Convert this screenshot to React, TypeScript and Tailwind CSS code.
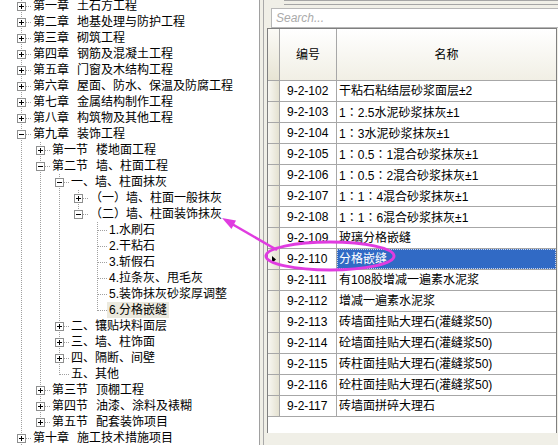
import React from 'react';

type TNode = { label: string; title?: string; exp?: '+' | '-'; kids?: TNode[]; sel?: boolean };
type Row = { node: TNode; level: number; guides: boolean[]; last: boolean };

const leaves: TNode[] = [
  { label: '1.水刷石' },
  { label: '2.干粘石' },
  { label: '3.斩假石' },
  { label: '4.拉条灰、甩毛灰' },
  { label: '5.装饰抹灰砂浆厚调整' },
  { label: '6.分格嵌缝', sel: true },
];

const tree: TNode[] = [
  { label: '第一章', title: '土石方工程', exp: '+' },
  { label: '第二章', title: '地基处理与防护工程', exp: '+' },
  { label: '第三章', title: '砌筑工程', exp: '+' },
  { label: '第四章', title: '钢筋及混凝土工程', exp: '+' },
  { label: '第五章', title: '门窗及木结构工程', exp: '+' },
  { label: '第六章', title: '屋面、防水、保温及防腐工程', exp: '+' },
  { label: '第七章', title: '金属结构制作工程', exp: '+' },
  { label: '第八章', title: '构筑物及其他工程', exp: '+' },
  {
    label: '第九章',
    title: '装饰工程',
    exp: '-',
    kids: [
      { label: '第一节', title: '楼地面工程', exp: '+' },
      {
        label: '第二节',
        title: '墙、柱面工程',
        exp: '-',
        kids: [
          {
            label: '一、墙、柱面抹灰',
            exp: '-',
            kids: [
              { label: '（一）墙、柱面一般抹灰', exp: '+' },
              { label: '（二）墙、柱面装饰抹灰', exp: '-', kids: leaves },
            ],
          },
          { label: '二、镶贴块料面层', exp: '+' },
          { label: '三、墙、柱饰面', exp: '+' },
          { label: '四、隔断、间壁', exp: '+' },
          { label: '五、其他' },
        ],
      },
      { label: '第三节', title: '顶棚工程', exp: '+' },
      { label: '第四节', title: '油漆、涂料及裱糊', exp: '+' },
      { label: '第五节', title: '配套装饰项目', exp: '+' },
    ],
  },
  { label: '第十章', title: '施工技术措施项目', exp: '+' },
];

// 第十章 之后还有章节, 根级竖线一直延续到底
function flatten(nodes: TNode[], level: number, guides: boolean[], out: Row[]) {
  nodes.forEach((n, i) => {
    const last = i === nodes.length - 1 && level > 0;
    out.push({ node: n, level, guides, last });
    if (n.kids && n.exp === '-') flatten(n.kids, level + 1, [...guides, !last], out);
  });
  return out;
}

const rows = flatten(tree, 0, [], []);

const items: [string, string][] = [
  ['9-2-102', '干粘石粘结层砂浆面层±2'],
  ['9-2-103', '1：2.5水泥砂浆抹灰±1'],
  ['9-2-104', '1：3水泥砂浆抹灰±1'],
  ['9-2-105', '1：0.5：1混合砂浆抹灰±1'],
  ['9-2-106', '1：0.5：2混合砂浆抹灰±1'],
  ['9-2-107', '1：1：4混合砂浆抹灰±1'],
  ['9-2-108', '1：1：6混合砂浆抹灰±1'],
  ['9-2-109', '玻璃分格嵌缝'],
  ['9-2-110', '分格嵌缝'],
  ['9-2-111', '有108胶增减一遍素水泥浆'],
  ['9-2-112', '增减一遍素水泥浆'],
  ['9-2-113', '砖墙面挂贴大理石(灌缝浆50)'],
  ['9-2-114', '砼墙面挂贴大理石(灌缝浆50)'],
  ['9-2-115', '砖柱面挂贴大理石(灌缝浆50)'],
  ['9-2-116', '砼柱面挂贴大理石(灌缝浆50)'],
  ['9-2-117', '砖墙面拼碎大理石'],
];

const LINE = '#a0a0a0';

// 全角冒号用繁体字体, 让冒号居中显示
function Name({ text }: { text: string }) {
  const parts = text.split('：');
  return (
    <>
      {parts.map((p, i) => (
        <React.Fragment key={i}>
          {i > 0 && <span className="font-['Noto_Sans_CJK_TC',sans-serif]">：</span>}
          {p}
        </React.Fragment>
      ))}
    </>
  );
}

function Guide({ on }: { on: boolean }) {
  return (
    <svg width="19" height="16" className="shrink-0" shapeRendering="crispEdges">
      {on && <line x1="9.5" y1="0" x2="9.5" y2="16" stroke={LINE} strokeDasharray="1 1" />}
    </svg>
  );
}

function Connector({ last, exp }: { last: boolean; exp?: '+' | '-' }) {
  return (
    <svg width="19" height="16" className="shrink-0" shapeRendering="crispEdges">
      <line x1="9.5" y1="0" x2="9.5" y2={last ? 9 : 16} stroke={LINE} strokeDasharray="1 1" />
      <line x1="10" y1="8.5" x2="19" y2="8.5" stroke={LINE} strokeDasharray="1 1" />
      {exp && (
        <g>
          <rect x="5.5" y="4.5" width="8" height="8" fill="#fff" stroke="#8e8f8f" />
          <line x1="7" y1="8.5" x2="12" y2="8.5" stroke="#000" />
          {exp === '+' && <line x1="9.5" y1="6" x2="9.5" y2="11" stroke="#000" />}
        </g>
      )}
    </svg>
  );
}

function TreeRow({ row }: { row: Row }) {
  const { node } = row;
  return (
    <div className="flex h-4 items-center">
      {row.guides.map((g, k) => (
        <Guide key={k} on={g} />
      ))}
      <Connector last={row.last} exp={node.exp} />
      <span
        className={
          'whitespace-nowrap px-[2px] leading-4 ' + (node.sel ? 'bg-[#ebe9de]' : '')
        }
      >
        {node.label}
        {node.title && <span className="ml-2">{node.title}</span>}
      </span>
    </div>
  );
}

export default function App() {
  return (
    <div className="relative flex h-[445px] w-[558px] overflow-hidden bg-[#f0efe7] font-['Liberation_Sans','Noto_Sans_CJK_SC',sans-serif] text-[12px] text-black">
      <div className="h-full w-[260px] shrink-0 overflow-hidden border-r border-[#a0a0a0] bg-white">
        <div className="-mt-[2px] pl-3">
          {rows.map((r, i) => (
            <TreeRow key={i} row={r} />
          ))}
        </div>
      </div>
      <div className="w-[3px] shrink-0" />
      <div className="flex flex-1 flex-col border-l border-[#a9a9a9]">
        <div className="h-[8px] shrink-0 pl-[20px]">
          <div className="h-[5px] border-y border-[#a5a5a5]" />
        </div>
        <div className="ml-[7px] h-[20px] w-[320px] shrink-0 border border-[#b7b7b7] bg-white pl-[4px] italic leading-[18px] text-[#aaaaaa]">
          Search...
        </div>
        <div className="ml-[3px] flex h-[405px] w-[290px] shrink-0 flex-col border-x border-t border-[#7f7f7f] bg-white">
          <div className="flex h-[52px] shrink-0 border-b border-[#a7a7a7] bg-gradient-to-b from-white to-[#f1efe5]">
            <div className="w-[12px] shrink-0 border-r border-[#a7a7a7] bg-gradient-to-b from-[#fbfaf6] to-[#e7e4d4]" />
            <div className="flex w-[57px] shrink-0 items-center justify-center border-r border-[#a7a7a7]">编号</div>
            <div className="flex flex-1 items-center justify-center">名称</div>
          </div>
          {items.map(([code, name]) => {
            const sel = code === '9-2-110';
            return (
              <div key={code} className="flex h-[21px] shrink-0 border-b border-[#a7a7a7]">
                <div className="flex w-[12px] shrink-0 items-center justify-center border-r border-[#a7a7a7] bg-gradient-to-r from-[#f8f7f2] to-[#e4e1d0]">
                  {sel && (
                    <svg width="4" height="7" viewBox="0 0 4 7">
                      <path d="M0 0 L4 3.5 L0 7 Z" fill="#000" />
                    </svg>
                  )}
                </div>
                <div className="flex w-[57px] shrink-0 items-center border-r border-[#a7a7a7] pl-[7px]">{code}</div>
                <div
                  className={
                    'flex flex-1 items-center whitespace-nowrap pl-[2px] ' +
                    (sel ? 'bg-[#316ac5] text-white outline-1 -outline-offset-1 outline-dotted outline-[#c9d6ee]' : '')
                  }
                >
                  <span>
                    <Name text={name} />
                  </span>
                </div>
              </div>
            );
          })}
        </div>
      </div>
      <svg className="pointer-events-none absolute inset-0" width="558" height="445">
        <ellipse cx="330" cy="256" rx="64" ry="14" fill="none" stroke="#e03ce0" strokeWidth="3" />
        <line x1="232" y1="224" x2="277" y2="250" stroke="#e03ce0" strokeWidth="2.5" />
        <path d="M222 218 L236 220.5 L231.5 229 Z" fill="#e03ce0" />
      </svg>
    </div>
  );
}
